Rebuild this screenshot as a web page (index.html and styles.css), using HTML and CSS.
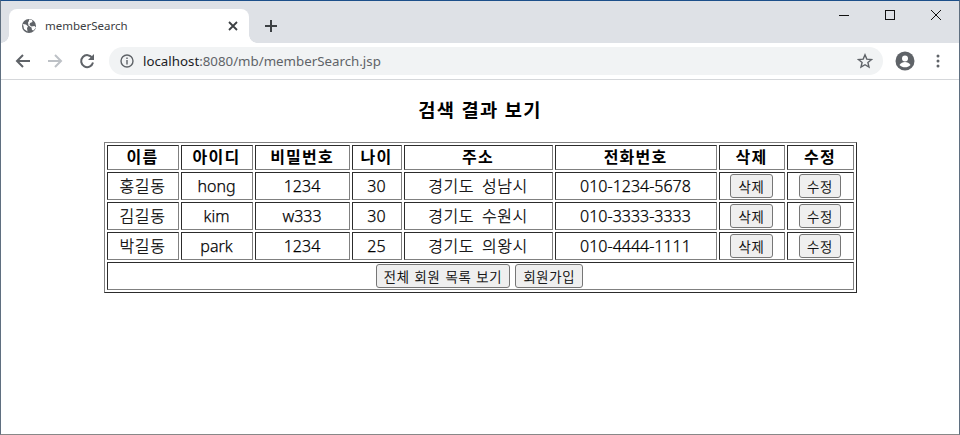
FILE: index.html
```html
<!DOCTYPE html>
<html lang="ko">
<head>
<meta charset="utf-8">
<title>memberSearch</title>
<link rel="stylesheet" href="styles.css">
</head>
<body>
<div class="window">
  <div class="tabbar">
    <div class="tab">
      <svg class="favicon" viewBox="0 0 16 16" width="16" height="16"><circle cx="8" cy="8" r="7" fill="#5f6368"/><path d="M2 6l3 .5 2 2-1 1.500 .5 3.500L3 11zM8 1.500l3 .5 .5 2-2.500 1-.5 2 2 1.500 3 -.5 1.500 1.500-2.500 3-1.500-.5-.5-2.500-3-2-.5-3L8 3z" fill="#fff"/></svg>
      <span class="tab-title">memberSearch</span>
      <svg class="tab-close" viewBox="0 0 10 10" width="10" height="10"><path d="M1 1l8 8M9 1l-8 8" stroke="#3c4043" stroke-width="1.800"/></svg>
    </div>
    <svg class="newtab" viewBox="0 0 14 14" width="14" height="14"><path d="M7 1v12M1 7h12" stroke="#3c4043" stroke-width="2"/></svg>
    <div class="winctl">
      <svg viewBox="0 0 12 12" width="12" height="12"><path d="M1 6.500h10" stroke="#111" stroke-width="1"/></svg>
      <svg viewBox="0 0 12 12" width="12" height="12"><rect x="1.500" y="1.500" width="9" height="9" fill="none" stroke="#111"/></svg>
      <svg viewBox="0 0 12 12" width="12" height="12"><path d="M1 1l10 10M11 1L1 11" stroke="#111"/></svg>
    </div>
  </div>
  <div class="toolbar">
    <svg class="nav" viewBox="0 0 16 16" width="16" height="16"><path d="M15 8H2M8 2L2 8l6 6" fill="none" stroke="#5f6368" stroke-width="2"/></svg>
    <svg class="nav" viewBox="0 0 16 16" width="16" height="16"><path d="M1 8h13M8 2l6 6-6 6" fill="none" stroke="#bdc1c6" stroke-width="2"/></svg>
    <svg class="nav" viewBox="0 0 16 16" width="16" height="16"><path d="M13.300 5A6 6 0 1 0 14 9.500" fill="none" stroke="#5f6368" stroke-width="2"/><path d="M15 1v6H9z" fill="#5f6368"/></svg>
    <div class="omnibox">
      <svg class="info" viewBox="0 0 14 14" width="14" height="14"><circle cx="7" cy="7" r="6" fill="none" stroke="#5f6368" stroke-width="1.400"/><path d="M7 6v4.500M7 3.500v1.500" stroke="#5f6368" stroke-width="1.400"/></svg>
      <span class="url"><span class="host">localhost</span>:8080/mb/memberSearch.jsp</span>
      <svg class="star" viewBox="0 0 16 16" width="16" height="16"><path d="M8 1.800l1.800 4.300 4.700.4-3.600 3 1.100 4.600L8 11.700l-4 2.400 1.100-4.600-3.600-3 4.700-.4z" fill="none" stroke="#5f6368" stroke-width="1.400"/></svg>
    </div>
    <svg class="avatar" viewBox="0 0 20 20" width="20" height="20"><circle cx="10" cy="10" r="9.500" fill="#5f6368"/><circle cx="10" cy="7.500" r="3" fill="#fff"/><path d="M4.500 14c1-2 3.500-3 5.500-3s4.500 1 5.500 3c-1.500 1.500-3.500 2.300-5.500 2.300S6 15.500 4.500 14z" fill="#fff"/></svg>
    <svg class="menu" viewBox="0 0 4 14" width="4" height="14"><circle cx="2" cy="2" r="1.500" fill="#5f6368"/><circle cx="2" cy="7" r="1.500" fill="#5f6368"/><circle cx="2" cy="12" r="1.500" fill="#5f6368"/></svg>
  </div>
  <main class="page">
    <h3 class="heading">검색 결과 보기</h3>
    <table class="members" border="1">
      <colgroup>
        <col class="c1"><col class="c2"><col class="c3"><col class="c4"><col class="c5"><col class="c6"><col class="c7"><col class="c8">
      </colgroup>
      <tr class="head"><th>이름</th><th>아이디</th><th>비밀번호</th><th>나이</th><th>주소</th><th>전화번호</th><th>삭제</th><th>수정</th></tr>
      <tr><td class="ko">홍길동</td><td>hong</td><td>1234</td><td>30</td><td class="ko">경기도 성남시</td><td>010-1234-5678</td><td><button class="small">삭제</button></td><td><button class="small">수정</button></td></tr>
      <tr><td class="ko">김길동</td><td>kim</td><td>w333</td><td>30</td><td class="ko">경기도 수원시</td><td>010-3333-3333</td><td><button class="small">삭제</button></td><td><button class="small">수정</button></td></tr>
      <tr><td class="ko">박길동</td><td>park</td><td>1234</td><td>25</td><td class="ko">경기도 의왕시</td><td>010-4444-1111</td><td><button class="small">삭제</button></td><td><button class="small">수정</button></td></tr>
      <tr><td colspan="8"><button class="big">전체 회원 목록 보기</button> <button class="big">회원가입</button></td></tr>
    </table>
  </main>
</div>
</body>
</html>
```
FILE: styles.css
```css
* { box-sizing: border-box; }
html, body { margin: 0; height: 100%; background: #fff; }
body { font-family: "Noto Sans", "Noto Sans CJK KR", sans-serif; overflow: hidden; }
.window { height: 435px; border: 1px solid #5f6f80; border-top: 1px solid #1c4f8a; border-bottom-color: #888; display: flex; flex-direction: column; }
.tabbar { height: 42px; background: #dee1e6; display: flex; align-items: flex-end; padding-left: 8px; flex: none; }
.tab { position: relative; width: 240px; height: 34px; background: #fff; border-radius: 8px 8px 0 0; display: flex; align-items: center; padding: 0 11px 0 12px; }
.tab::before, .tab::after { content: ""; position: absolute; bottom: 0; width: 8px; height: 8px; }
.tab::before { left: -8px; background: radial-gradient(circle at 0 0, #dee1e6 7.500px, #fff 8px); }
.tab::after { right: -8px; background: radial-gradient(circle at 100% 0, #dee1e6 7.500px, #fff 8px); }
.favicon { flex: none; }
.tab-title { font: 11.500px "Noto Sans", sans-serif; color: #3c4043; margin: 0 0 1px 8px; flex: 1; }
.tab-close { flex: none; }
.newtab { flex: none; margin: 0 0 10px 15px; }
.winctl { margin-left: auto; align-self: flex-start; display: flex; gap: 34px; padding: 8px 17px 0 0; }
.toolbar { height: 37px; flex: none; display: flex; align-items: center; padding-left: 14px; border-bottom: 1px solid #d5d7da; background: #fff; }
.nav { flex: none; margin-right: 16px; }
.omnibox { width: 774px; height: 28px; background: #f1f3f4; border-radius: 14px; display: flex; align-items: center; padding: 0 10px 0 11px; margin-left: -2px; }
.info { flex: none; }
.url { font: 13.300px "Noto Sans", sans-serif; color: #5f6368; margin-left: 9px; flex: 1; }
.host { color: #202124; }
.avatar { flex: none; margin-left: 12px; }
.menu { flex: none; margin-left: 21px; }
.page { flex: 1; }
.heading { margin: 16px 0 18px; text-align: center; font-size: 18.720px; font-weight: 700; line-height: 28px; color: #000; letter-spacing: 1.300px; }
.members { margin: 0 auto; width: 753px; table-layout: fixed; font-size: 16px; color: #000; }
.members th, .members td { padding: 1px; text-align: center; line-height: 24px; }
.members th { height: 25px; line-height: 21px; letter-spacing: 1.200px; }
.members td { font-weight: 300; -webkit-text-stroke: .25px #000; }
.members .ko { letter-spacing: .6px; word-spacing: 3px; }
.c1, .c2 { width: 72px; }
.c3 { width: 95px; }
.c4 { width: 50px; }
.c5 { width: 149px; }
.c6 { width: 162px; }
.c7 { width: 66px; }
.c8 { width: 67px; }
button { font-family: "Noto Sans CJK KR", sans-serif; font-size: 13.333px; font-weight: 300; letter-spacing: .7px; word-spacing: .5px; color: #000; background: #efefef; border: 1px solid #767676; border-radius: 3px; vertical-align: top; height: 24px; }
.small { padding: 0 7.500px; }
.big { padding: 0 7px; margin-right: 1px; }
```
